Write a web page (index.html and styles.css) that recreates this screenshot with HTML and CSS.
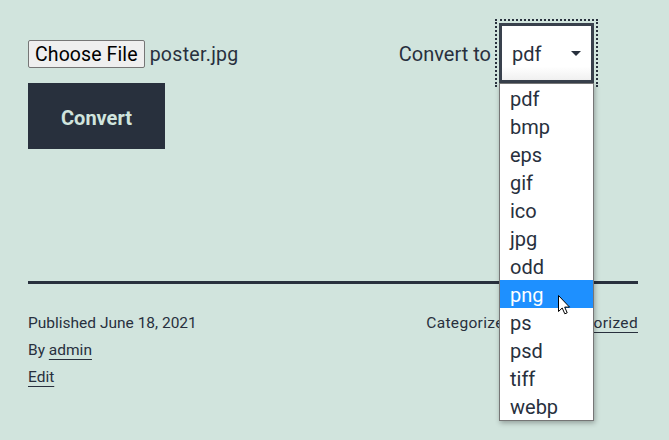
FILE: index.html
```html
<!DOCTYPE html>
<html lang="en">
<head>
<meta charset="utf-8">
<title>Convert</title>
<link rel="stylesheet" href="styles.css">
</head>
<body>
<main class="page">
  <form class="converter">
    <div class="top-row">
      <div class="file-field">
        <span class="file-btn">Choose File</span>
        <span class="file-name">poster.jpg</span>
      </div>
      <div class="format-field">
        <span class="format-label">Convert to</span>
        <div class="select-wrap">
          <div class="select">
            <span class="select-value">pdf</span>
            <span class="select-arrow"></span>
          </div>
          <ul class="options">
            <li>pdf</li>
            <li>bmp</li>
            <li>eps</li>
            <li>gif</li>
            <li>ico</li>
            <li>jpg</li>
            <li>odd</li>
            <li class="active">png
              <svg class="cursor" width="13" height="20" viewBox="0 0 13 20"><path d="M0.5 0.5 L0.5 16.5 L4.2 13 L6.8 18.8 L9.2 17.8 L6.7 12.1 L11.5 12.1 Z" fill="#fff" stroke="#000" stroke-width="1" stroke-linejoin="round"/></svg>
            </li>
            <li>ps</li>
            <li>psd</li>
            <li>tiff</li>
            <li>webp</li>
          </ul>
        </div>
      </div>
    </div>
    <button type="button" class="convert-btn">Convert</button>
  </form>
  <hr class="divider">
  <footer class="entry-footer">
    <div class="meta-left">
      <div>Published June 18, 2021</div>
      <div>By <a href="#">admin</a></div>
      <div><a href="#">Edit</a></div>
    </div>
    <div class="meta-right">Categorized in <a href="#">Uncategorized</a></div>
  </footer>
</main>
</body>
</html>
```
FILE: styles.css
```css
* { box-sizing: border-box; }
html, body { margin: 0; padding: 0; }
body {
  background: #d1e4dd;
  color: #28303d;
  font-family: "Segoe UI", Roboto, "Noto Sans", sans-serif;
  font-size: 20px;
  width: 669px;
  height: 440px;
  overflow: hidden;
}
.page {
  padding: 23px 31px 0 28px;
}
.top-row {
  display: flex;
  align-items: center;
  height: 60px;
}
.file-field {
  display: flex;
  align-items: center;
  gap: 5px;
  padding-top: 2px;
}
.file-btn {
  display: inline-flex;
  align-items: center;
  height: 28px;
  padding: 1px 6px 0;
  background: #efefef;
  border: 1px solid #767676;
  border-radius: 2px;
  color: #000;
  font-size: 19.5px;
  letter-spacing: 0.1px;
}
.file-name { font-size: 19.5px; letter-spacing: 0.3px; }
.format-field {
  display: flex;
  align-items: center;
  margin-left: auto;
  margin-right: 44px;
  gap: 8px;
}
.format-label { padding-top: 2px; }
.select-wrap {
  position: relative;
}
.select {
  width: 95px;
  height: 60px;
  border: 3px solid #39414d;
  background: linear-gradient(#fff 75%, #f0f0f0);
  display: flex;
  align-items: center;
  padding: 2px 10px 0;
  outline: 2px dotted #28303d;
  outline-offset: 2px;
}
.select-value { flex: 1; }
.select-arrow {
  width: 0;
  height: 0;
  margin-top: -2px;
  border-left: 5px solid transparent;
  border-right: 5px solid transparent;
  border-top: 5px solid #28303d;
}
.options {
  position: absolute;
  top: 100%;
  left: 0;
  width: 95px;
  margin: 0;
  padding: 0;
  list-style: none;
  background: #fff;
  border: 1px solid #767676;
  box-shadow: 1px 2px 5px rgba(0,0,0,0.3);
  z-index: 5;
}
.options li {
  position: relative;
  height: 28px;
  line-height: 30px;
  padding-left: 10px;
  font-size: 20px;
  color: #28303d;
}
.options li.active {
  background: #1e90ff;
  color: #fff;
}
.cursor {
  position: absolute;
  left: 58px;
  top: 15px;
}
.convert-btn {
  display: block;
  width: 137px;
  height: 66px;
  margin: 0;
  padding: 4px 0 0;
  border: 0;
  background: #28303d;
  color: #d1e4dd;
  font-family: inherit;
  font-size: 20px;
  font-weight: 700;
}
.divider {
  margin: 132px 0 0 0;
  border: 0;
  height: 3px;
  background: #28303d;
}
.entry-footer {
  display: flex;
  justify-content: space-between;
  padding-top: 26px;
  font-size: 15.5px;
  line-height: 27px;
}
.meta-right { letter-spacing: 0.33px; }
.entry-footer a {
  color: #28303d;
  text-decoration: underline;
  text-decoration-thickness: 1px;
  text-underline-offset: 4px;
}
```
